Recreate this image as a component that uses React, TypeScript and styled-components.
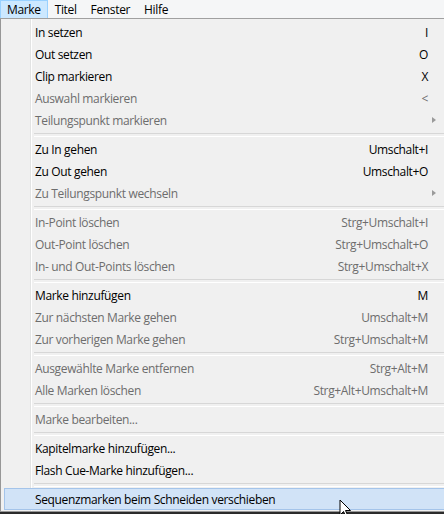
import React from "react";
import styled, { createGlobalStyle } from "styled-components";

const GlobalStyle = createGlobalStyle`
  html, body { margin: 0; padding: 0; background: #f0f0f0; }
  body { font-family: "Open Sans", "Noto Sans", "Liberation Sans", sans-serif; font-size: 12px; overflow: hidden; }
  * { box-sizing: border-box; }
`;

const Page = styled.div`
  width: 444px;
  height: 514px;
  position: relative;
  overflow: hidden;
  display: flex;
  flex-direction: column;
  background: #2b2b2b;
`;

const MenuBar = styled.div`
  height: 19px;
  display: flex;
  align-items: stretch;
  background: #f5f6f7;
  border-bottom: 1px solid #a0a0a0;
  flex: none;
`;

const BarItem = styled.div<{ $active?: boolean }>`
  padding: 0 6px;
  display: flex;
  align-items: center;
  color: #000;
  letter-spacing: -0.35px;
  background: ${(p) => (p.$active ? "#cce8ff" : "transparent")};
  border: 1px solid ${(p) => (p.$active ? "#99d1ff" : "transparent")};
  border-bottom: none;
  line-height: 16px;
`;

const Menu = styled.div`
  flex: none;
  height: 493px;
  background: #f0f0f0;
  border-left: 1px solid #979797;
  border-bottom: 1px solid #979797;
  padding: 2px 0 0 0;
  position: relative;
  display: flex;
  flex-direction: column;
`;

const Gutter = styled.div`
  position: absolute;
  left: 29px;
  top: 0;
  bottom: 0;
  width: 2px;
  border-left: 1px solid #e2e3e3;
  border-right: 1px solid #ffffff;
`;

const Item = styled.div<{ $disabled?: boolean; $hover?: boolean }>`
  height: 22px;
  display: flex;
  align-items: center;
  position: relative;
  padding: 0 16px 0 ${(p) => (p.$hover ? "30px" : "34px")};
  margin-left: ${(p) => (p.$hover ? "3px" : "0")};
  color: ${(p) => (p.$disabled ? "#6d6d6d" : "#000")};
  background: ${(p) => (p.$hover ? "#d1e3f7" : "transparent")};
  border: ${(p) => (p.$hover ? "1px solid #a4c4ea" : "none")};
  border-right: none;
  z-index: 1;
  letter-spacing: -0.35px;
`;

const Label = styled.span`
  flex: 1;
  white-space: nowrap;
`;

const Shortcut = styled.span`
  white-space: nowrap;
`;

const Arrow = styled.span`
  position: absolute;
  right: 8px;
  top: 8px;
  width: 0;
  height: 0;
  border-top: 3px solid transparent;
  border-bottom: 3px solid transparent;
  border-left: 4px solid #9a9a9a;
`;

const Separator = styled.div`
  height: 7px;
  margin-left: 33px;
  display: flex;
  align-items: center;
  &::before {
    content: "";
    display: block;
    width: 100%;
    height: 2px;
    border-top: 1px solid #d7d7d7;
    border-bottom: 1px solid #ffffff;
  }
`;

const Cursor = styled.svg`
  position: absolute;
  left: 339px;
  top: 499px;
  z-index: 5;
`;

type Entry =
  | { sep: true }
  | { label: string; shortcut?: string; disabled?: boolean; sub?: boolean; hover?: boolean };

const entries: Entry[] = [
  { label: "In setzen", shortcut: "I" },
  { label: "Out setzen", shortcut: "O" },
  { label: "Clip markieren", shortcut: "X" },
  { label: "Auswahl markieren", shortcut: "<", disabled: true },
  { label: "Teilungspunkt markieren", disabled: true, sub: true },
  { sep: true },
  { label: "Zu In gehen", shortcut: "Umschalt+I" },
  { label: "Zu Out gehen", shortcut: "Umschalt+O" },
  { label: "Zu Teilungspunkt wechseln", disabled: true, sub: true },
  { sep: true },
  { label: "In-Point löschen", shortcut: "Strg+Umschalt+I", disabled: true },
  { label: "Out-Point löschen", shortcut: "Strg+Umschalt+O", disabled: true },
  { label: "In- und Out-Points löschen", shortcut: "Strg+Umschalt+X", disabled: true },
  { sep: true },
  { label: "Marke hinzufügen", shortcut: "M" },
  { label: "Zur nächsten Marke gehen", shortcut: "Umschalt+M", disabled: true },
  { label: "Zur vorherigen Marke gehen", shortcut: "Strg+Umschalt+M", disabled: true },
  { sep: true },
  { label: "Ausgewählte Marke entfernen", shortcut: "Strg+Alt+M", disabled: true },
  { label: "Alle Marken löschen", shortcut: "Strg+Alt+Umschalt+M", disabled: true },
  { sep: true },
  { label: "Marke bearbeiten...", disabled: true },
  { sep: true },
  { label: "Kapitelmarke hinzufügen..." },
  { label: "Flash Cue-Marke hinzufügen..." },
  { sep: true },
  { label: "Sequenzmarken beim Schneiden verschieben", hover: true },
];

export default function App() {
  return (
    <>
      <GlobalStyle />
      <Page>
        <MenuBar>
          <BarItem $active>Marke</BarItem>
          <BarItem>Titel</BarItem>
          <BarItem>Fenster</BarItem>
          <BarItem>Hilfe</BarItem>
        </MenuBar>
        <Menu>
          <Gutter />
          {entries.map((e, i) =>
            "sep" in e ? (
              <Separator key={i} />
            ) : (
              <Item key={i} $disabled={e.disabled} $hover={e.hover}>
                <Label>{e.label}</Label>
                {e.shortcut && <Shortcut>{e.shortcut}</Shortcut>}
                {e.sub && <Arrow />}
              </Item>
            )
          )}
        </Menu>
        <Cursor width="14" height="20" viewBox="0 0 14 20">
          <path d="M1 1 L1 16 L4.5 12.5 L7 18 L9 17 L6.5 11.5 L11.5 11.5 Z" fill="#fff" stroke="#000" strokeWidth="1" strokeLinejoin="miter" />
        </Cursor>
      </Page>
    </>
  );
}
